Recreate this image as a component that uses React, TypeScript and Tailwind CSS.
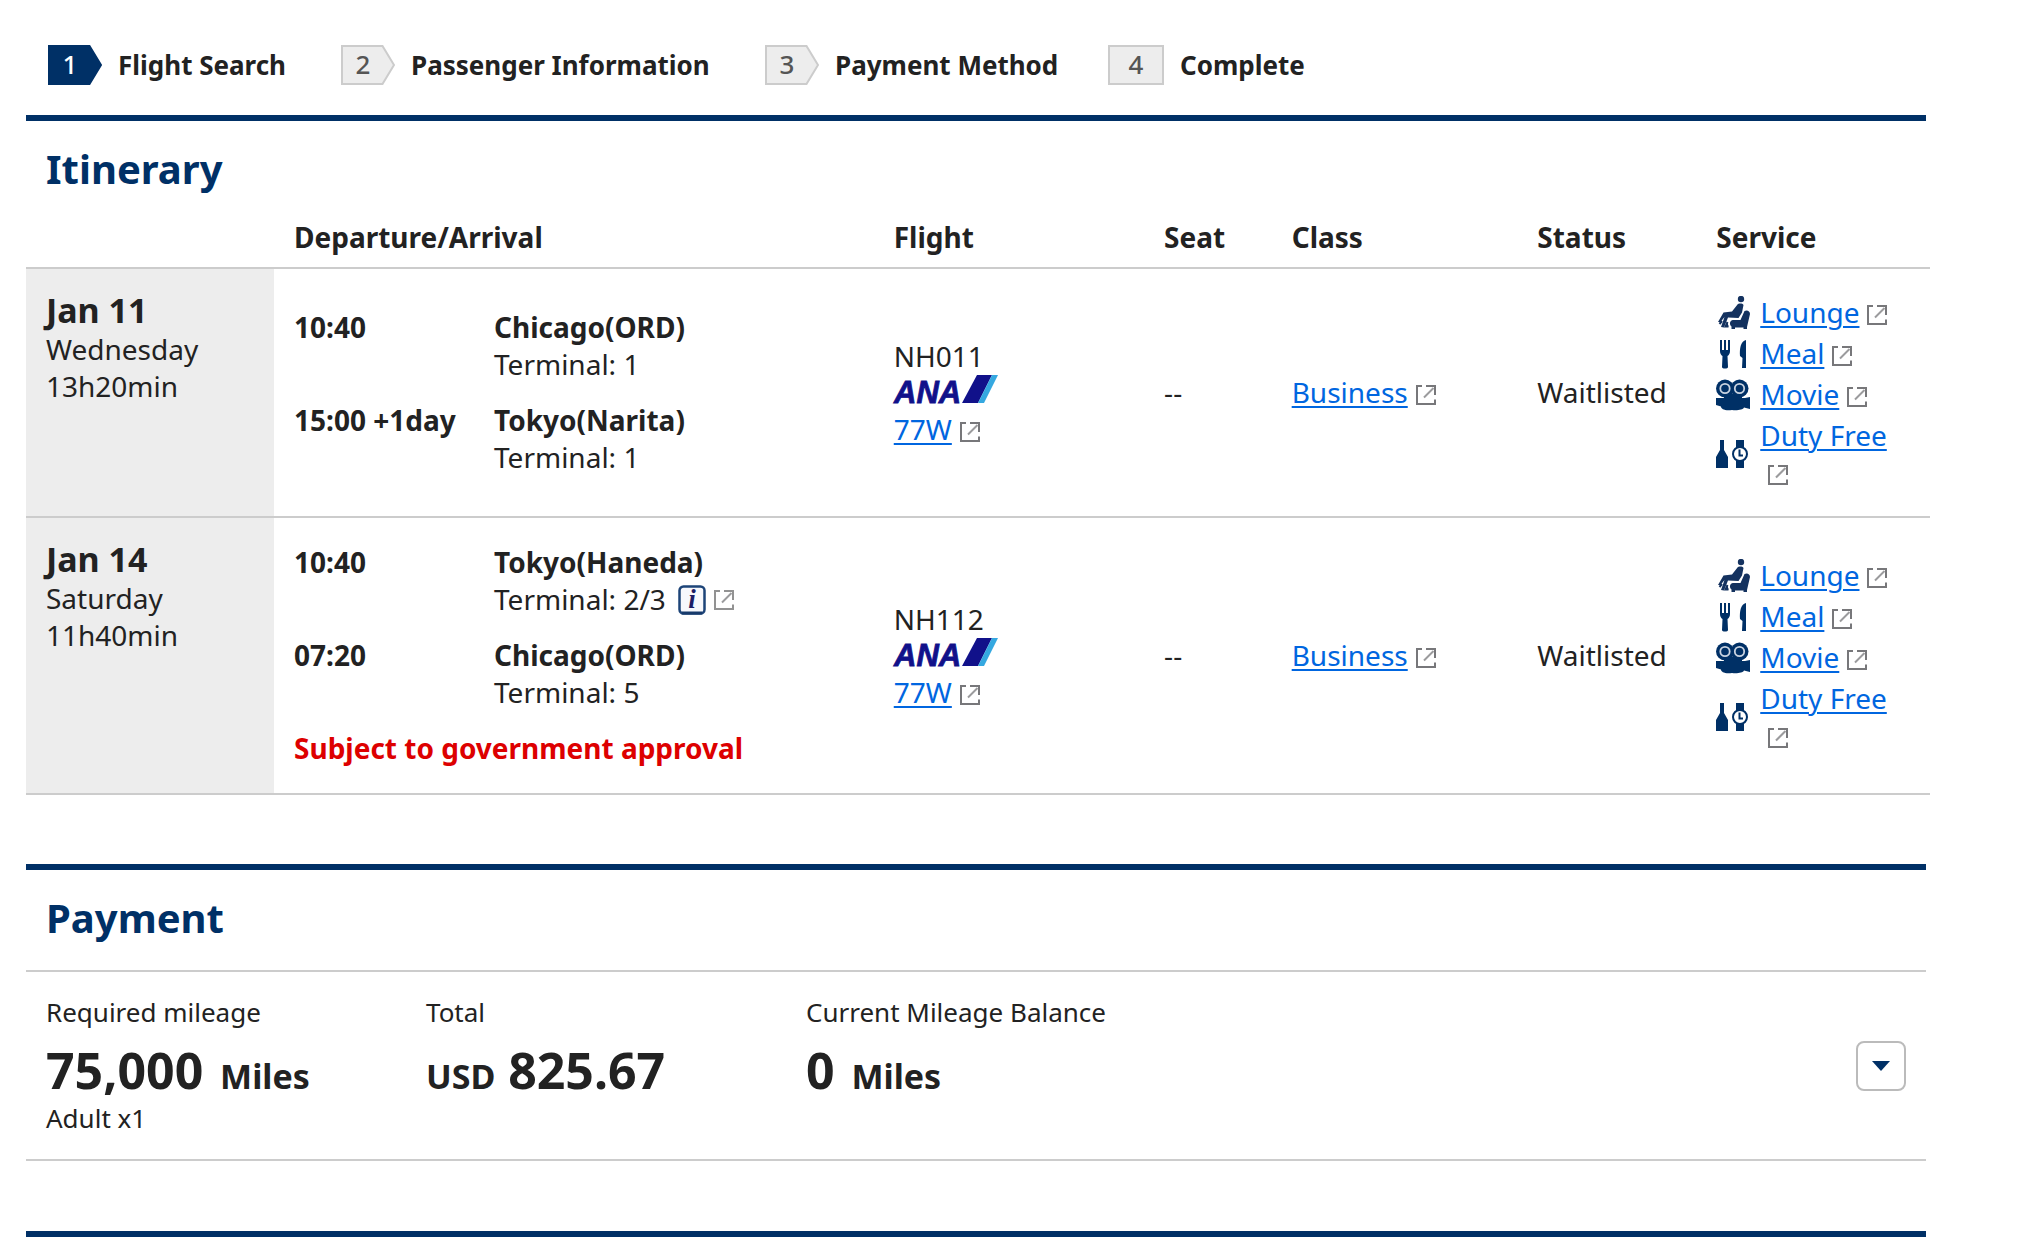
import type { ReactNode } from 'react';

type Service = { label: string; icon: ReactNode };

type Stop = { time: string; place: string; terminal: string; info?: boolean };

type Leg = {
  date: string;
  weekday: string;
  duration: string;
  stops: Stop[];
  note?: string;
  flight: string;
  aircraft: string;
  seat: string;
  cabin: string;
  status: string;
};

const STEPS = ['Flight Search', 'Passenger Information', 'Payment Method', 'Complete'];

const LEGS: Leg[] = [
  {
    date: 'Jan 11',
    weekday: 'Wednesday',
    duration: '13h20min',
    stops: [
      { time: '10:40', place: 'Chicago(ORD)', terminal: '1' },
      { time: '15:00 +1day', place: 'Tokyo(Narita)', terminal: '1' },
    ],
    flight: 'NH011',
    aircraft: '77W',
    seat: '--',
    cabin: 'Business',
    status: 'Waitlisted',
  },
  {
    date: 'Jan 14',
    weekday: 'Saturday',
    duration: '11h40min',
    stops: [
      { time: '10:40', place: 'Tokyo(Haneda)', terminal: '2/3', info: true },
      { time: '07:20', place: 'Chicago(ORD)', terminal: '5' },
    ],
    note: 'Subject to government approval',
    flight: 'NH112',
    aircraft: '77W',
    seat: '--',
    cabin: 'Business',
    status: 'Waitlisted',
  },
];

// Arrow-shaped badge; the last step is a plain box.
const StepBadge = ({ step, active, last }: { step: number; active: boolean; last: boolean }) => {
  const width = last ? 56 : 54;
  return (
    <svg width={width} height="40" viewBox={`0 0 ${width} 40`} className="shrink-0">
      <path
        d={last ? 'M1 1H55V39H1Z' : 'M1 1H41.500L53 20L41.500 39H1Z'}
        fill={active ? '#003066' : '#ededed'}
        stroke={active ? '#003066' : '#cccccc'}
        strokeWidth="2"
      />
      <text
        x={last ? 28 : 22}
        y="29"
        textAnchor="middle"
        fontSize="26"
        className="font-medium"
        fill={active ? '#ffffff' : '#555555'}
      >
        {step}
      </text>
    </svg>
  );
};

const ExternalIcon = ({ muted = false }: { muted?: boolean }) => (
  <svg
    width="20"
    height="20"
    viewBox="0 0 20 20"
    fill="none"
    stroke={muted ? '#929292' : '#77777a'}
    strokeWidth="2"
    className="ml-2 inline-block align-[-2px]"
    aria-hidden="true"
  >
    <path d="M6 1H1V19H19V14.500" />
    <path d="M10 1H19V10" />
    <path d="M8 12.500L17.500 3" stroke="#9b9b9d" />
  </svg>
);

const InfoIcon = () => (
  <svg width="28" height="30" viewBox="0 0 28 30" className="ml-3 inline-block" aria-hidden="true">
    <rect x="1.500" y="1.500" width="25" height="27" rx="4" fill="#f7f8fc" stroke="#1d4478" strokeWidth="2.500" />
    <path d="M4 28H24" stroke="#173a6b" strokeWidth="3" />
    <text
      x="14"
      y="23"
      textAnchor="middle"
      fontSize="27"
      fontWeight="700"
      fontStyle="italic"
      fontFamily="Liberation Serif, Times New Roman, serif"
      fill="#1d1d66"
    >
      i
    </text>
  </svg>
);

const AnaLogo = () => (
  <svg width="104" height="28" viewBox="0 0 104 28" className="block overflow-visible" role="img" aria-label="ANA">
    <text
      x="0"
      y="28"
      fontSize="31"
      fontWeight="700"
      fontStyle="italic"
      fontFamily="Liberation Sans, Arial, sans-serif"
      fill="#11118a"
      stroke="#11118a"
      strokeWidth="0.800"
    >
      ANA
    </text>
    <path d="M83 0H98L84 28H68Z" fill="#11118a" />
    <path d="M98 0H104L90 28H84Z" fill="#35a8e0" />
  </svg>
);

const LoungeIcon = () => (
  <svg width="34" height="34" viewBox="0 0 34 34" fill="#14325f" aria-hidden="true">
    <circle cx="25" cy="3" r="3.200" />
    <path d="M21.500 8.500C22.500 7.200 26.500 7 27.500 9L26 16.500L22.500 22L12 21.500L8 31.500L5 31L8.500 21L4.500 26H2L7.500 16.500L16 15.500Z" />
    <path d="M6 25L3.500 28M12.500 30.500H9.500L11.500 26" stroke="#14325f" strokeWidth="2" />
    <path d="M28.500 15C31 13.500 34 15 34 18L31 31V33H27.500V31.500H19V33H15.500V30.500C13 28.500 13.500 24.500 17 24H24.500Z" />
  </svg>
);

const MealIcon = () => (
  <svg width="34" height="30" viewBox="0 0 34 30" fill="#003066" aria-hidden="true">
    <path d="M4 1H6V11H8V1H10V11H12V1H14V12C14 14.500 13 16 11.500 17L12 28C12 30 6 30 6 28L6.500 17C5 16 4 14.500 4 12Z" />
    <path d="M30 1V29H26L26.500 19L24 17C23.500 10 24.500 2 30 1Z" />
  </svg>
);

const MovieIcon = () => (
  <svg width="34" height="32" viewBox="0 0 34 32" fill="#003066" aria-hidden="true">
    <circle cx="9" cy="9.500" r="9" />
    <circle cx="23.500" cy="9.500" r="9" />
    <path d="M0 19H8V15H26V19H29L34 18V30L28 28.500C27 31 21 31.500 16 31C9 32 5 30 5 27.500L0 26Z" />
    <circle cx="9" cy="9.500" r="4.700" fill="none" stroke="#c9d3e0" strokeWidth="1.800" />
    <circle cx="23.500" cy="9.500" r="4.700" fill="none" stroke="#c9d3e0" strokeWidth="1.800" />
  </svg>
);

const DutyFreeIcon = () => (
  <svg width="34" height="30" viewBox="0 0 34 30" fill="#003066" aria-hidden="true">
    <path d="M4 1H8V11L12 18V29H0V18L4 11Z" />
    <path d="M20 1H28V8H20ZM20 22H28V29H20Z" />
    <circle cx="24" cy="15" r="7" fill="#ffffff" stroke="#003066" strokeWidth="2" />
    <path d="M23.500 10.500V16.500H27" fill="none" stroke="#003066" strokeWidth="2" />
  </svg>
);

const SERVICES: Service[] = [
  { label: 'Lounge', icon: <LoungeIcon /> },
  { label: 'Meal', icon: <MealIcon /> },
  { label: 'Movie', icon: <MovieIcon /> },
  { label: 'Duty Free', icon: <DutyFreeIcon /> },
];

const ExternalLink = ({ children }: { children: ReactNode }) => (
  <>
    <a href="#" className="text-[#0066e0] underline decoration-2 underline-offset-[3px]">
      {children}
    </a>
    <ExternalIcon />
  </>
);

const StopRow = ({ stop }: { stop: Stop }) => (
  <div className="flex">
    <div className="w-[200px] shrink-0 font-bold whitespace-nowrap">{stop.time}</div>
    <div>
      <div className="font-bold">{stop.place}</div>
      <div className="flex items-center">
        Terminal: {stop.terminal}
        {stop.info && (
          <a href="#" aria-label="Terminal information" className="flex items-center">
            <InfoIcon />
            <ExternalIcon muted />
          </a>
        )}
      </div>
    </div>
  </div>
);

const LegRow = ({ leg }: { leg: Leg }) => (
  <tr className="border-b-2 border-[#cccccc]">
    <th scope="row" className="bg-[#ededed] px-5 pt-5 pb-6 text-left align-top font-normal">
      <div className="text-[34px] leading-[42px] font-bold">{leg.date}</div>
      <div>{leg.weekday}</div>
      <div>{leg.duration}</div>
    </th>
    <td className="px-5 py-[26px]">
      <div className="flex flex-col gap-[19px]">
        {leg.stops.map((stop) => (
          <StopRow key={stop.place} stop={stop} />
        ))}
        {leg.note && <p className="font-bold text-[#dd0000]">{leg.note}</p>}
      </div>
    </td>
    <td className="px-5">
      <div>{leg.flight}</div>
      <AnaLogo />
      <div className="mt-2">
        <ExternalLink>{leg.aircraft}</ExternalLink>
      </div>
    </td>
    <td className="px-5">{leg.seat}</td>
    <td className="px-5">
      <ExternalLink>{leg.cabin}</ExternalLink>
    </td>
    <td className="px-5">{leg.status}</td>
    <td className="px-5 py-[25px]">
      <ul className="flex flex-col gap-1">
        {SERVICES.map((service) => (
          <li key={service.label} className="flex items-center gap-[10px]">
            <span className="w-[34px] shrink-0">{service.icon}</span>
            <span>
              <ExternalLink>{service.label}</ExternalLink>
            </span>
          </li>
        ))}
      </ul>
    </td>
  </tr>
);

const SectionTitle = ({ children }: { children: ReactNode }) => (
  <h2 className="px-5 text-[40px] leading-[52px] font-bold text-[#003066]">{children}</h2>
);

const Amount = ({ children }: { children: ReactNode }) => (
  <dd className="mt-[15px] text-[34px] leading-[48px] font-bold">{children}</dd>
);

export default function App() {
  return (
    <main className="min-h-screen bg-white pr-[106px] pl-[26px] font-['Noto_Sans','Lucida_Grande',sans-serif] text-[28px] leading-[37px] text-[#222222]">
      <ol className="grid grid-cols-[293px_424px_343px_auto] px-[22px] pt-[45px] pb-[30px] text-[26px] leading-[40px] font-bold">
        {STEPS.map((label, i) => (
          <li key={label} className="flex items-center gap-4 whitespace-nowrap" aria-current={i === 0 ? 'step' : undefined}>
            <StepBadge step={i + 1} active={i === 0} last={i === STEPS.length - 1} />
            {label}
          </li>
        ))}
      </ol>

      <section className="border-t-[6px] border-[#003066] pt-[22px] pb-[69px]">
        <SectionTitle>Itinerary</SectionTitle>
        <table className="mt-6 -mr-1 w-[calc(100%+4px)] table-fixed border-collapse">
          <colgroup>
            <col className="w-[248px]" />
            <col className="w-[31.5%]" />
            <col className="w-[14.2%]" />
            <col className="w-[6.7%]" />
            <col className="w-[12.9%]" />
            <col className="w-[9.4%]" />
            <col />
          </colgroup>
          <thead>
            <tr className="border-b-2 border-[#cccccc] text-left">
              <td />
              {['Departure/Arrival', 'Flight', 'Seat', 'Class', 'Status', 'Service'].map((title) => (
                <th key={title} scope="col" className="px-5 pb-[11px] font-bold">
                  {title}
                </th>
              ))}
            </tr>
          </thead>
          <tbody>
            {LEGS.map((leg) => (
              <LegRow key={leg.date} leg={leg} />
            ))}
          </tbody>
        </table>
      </section>

      <section className="border-t-[6px] border-[#003066] pt-[22px] pb-[70px]">
        <SectionTitle>Payment</SectionTitle>
        <div className="mt-[26px] flex items-center justify-between border-y-2 border-[#cccccc] px-5 py-[22px]">
          <dl className="flex items-start">
            <div className="w-[380px]">
              <dt className="text-[26px]">Required mileage</dt>
              <Amount>
                <span className="mr-2 text-[50px]">75,000</span> Miles
              </Amount>
              <dd className="text-[26px]">Adult x1</dd>
            </div>
            <div className="w-[380px]">
              <dt className="text-[26px]">Total</dt>
              <Amount>
                USD <span className="ml-1 text-[50px]">825.67</span>
              </Amount>
            </div>
            <div>
              <dt className="text-[26px]">Current Mileage Balance</dt>
              <Amount>
                <span className="mr-2 text-[50px]">0</span> Miles
              </Amount>
            </div>
          </dl>
          <button
            type="button"
            aria-label="Show payment details"
            className="flex size-[50px] items-center justify-center rounded-lg border-2 border-[#bbbbbb] bg-white"
          >
            <svg width="18" height="10" viewBox="0 0 18 10" fill="#003066" aria-hidden="true">
              <path d="M0 0H18L9 10Z" />
            </svg>
          </button>
        </div>
      </section>

      <div className="border-t-[6px] border-[#003066]" />
    </main>
  );
}
